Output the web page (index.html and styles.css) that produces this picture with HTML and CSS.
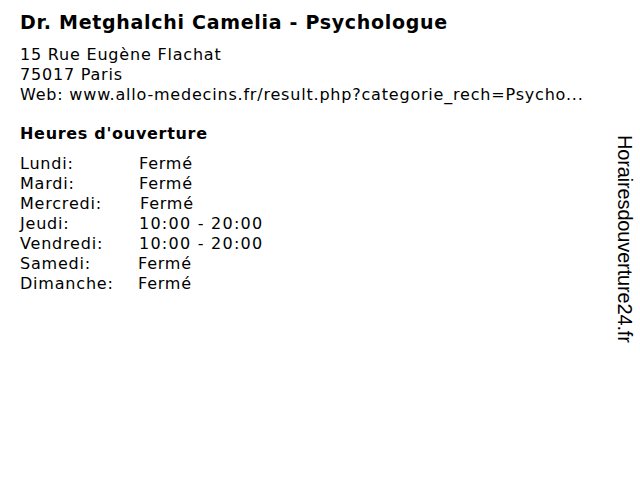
FILE: index.html
```html
<!DOCTYPE html>
<html lang="fr">
<head>
<meta charset="utf-8">
<link rel="stylesheet" href="styles.css">
</head>
<body>
<div class="page">
  <h1 class="title">Dr. Metghalchi Camelia - Psychologue</h1>
  <div class="address">
    <div>15 Rue Eugène Flachat</div>
    <div>75017 Paris</div>
    <div>Web: www.allo-medecins.fr/result.php?categorie_rech=Psycho...</div>
  </div>
  <h2 class="hours-title">Heures d'ouverture</h2>
  <div class="hours">
    <span>Lundi:</span><span>Fermé</span>
    <span>Mardi:</span><span>Fermé</span>
    <span>Mercredi:</span><span class="shift">Fermé</span>
    <span>Jeudi:</span><span class="time">10:00 - 20:00</span>
    <span>Vendredi:</span><span class="time">10:00 - 20:00</span>
    <span>Samedi:</span><span class="back">Fermé</span>
    <span>Dimanche:</span><span class="back">Fermé</span>
  </div>
</div>
<div class="brand">Horairesdouverture24.fr</div>
</body>
</html>
```
FILE: styles.css
```css
html, body {
  margin: 0;
  padding: 0;
  background: #fff;
}
body {
  font-family: "DejaVu Sans", Verdana, sans-serif;
  color: #000;
}
.page {
  padding: 9px 20px 0 20px;
}
.title {
  margin: 0;
  font-size: 19px;
  font-weight: bold;
  line-height: 26px;
  letter-spacing: 0.7px;
}
.address {
  margin-top: 10px;
  font-size: 16px;
  line-height: 20px;
  letter-spacing: 0.8px;
}
.hours-title {
  margin: 19px 0 0 0;
  font-size: 16px;
  font-weight: bold;
  line-height: 20px;
  letter-spacing: 0.7px;
}
.hours {
  margin-top: 10px;
  display: grid;
  grid-template-columns: 119px auto;
  font-size: 16px;
  line-height: 20px;
  letter-spacing: 0.8px;
  justify-content: start;
}
.time { letter-spacing: 1.25px; }
.shift { padding-left: 1px; }
.back { margin-left: -1px; }
.brand {
  position: absolute;
  left: 613px;
  top: 135px;
  font-family: "Liberation Sans", Arial, sans-serif;
  font-size: 20px;
  letter-spacing: -0.15px;
  writing-mode: vertical-rl;
  line-height: 24px;
}
```
